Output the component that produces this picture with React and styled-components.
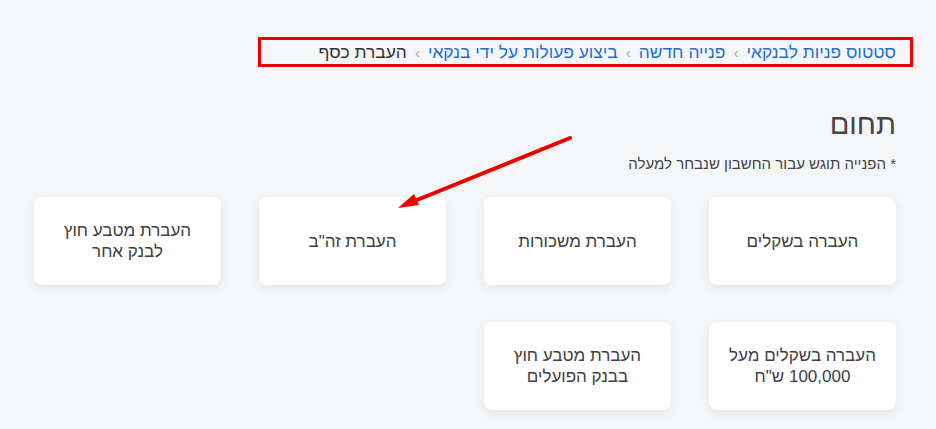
import React from "react";
import styled, { createGlobalStyle } from "styled-components";

const GlobalStyle = createGlobalStyle`
  html, body {
    margin: 0;
    padding: 0;
    background: #f5f6f8;
  }
  body {
    font-family: "Liberation Sans", "DejaVu Sans", Arial, sans-serif;
    color: #454545;
  }
`;

const Page = styled.div`
  position: relative;
  direction: rtl;
  width: 936px;
  height: 429px;
  box-sizing: border-box;
  padding: 40px 40px 0 40px;
  overflow: hidden;
`;

const Breadcrumbs = styled.nav`
  position: relative;
  display: flex;
  align-items: center;
  gap: 8px;
  height: 24px;
  font-size: 17.4px;

  .link {
    color: #1f6fd6;
    text-decoration: none;
  }
  .current {
    color: #333;
  }
  .sep {
    color: #a8a8a8;
    font-size: 15px;
  }
`;

const Highlight = styled.div`
  position: absolute;
  top: -3px;
  right: -17px;
  width: 655px;
  height: 30px;
  border: 3px solid #ee0000;
  box-sizing: border-box;
`;

const Title = styled.h1`
  margin: 42px 0 0;
  font-size: 29px;
  font-weight: normal;
  color: #444;
  line-height: 36px;
`;

const Note = styled.p`
  margin: 13px 0 0;
  font-size: 15px;
  line-height: 18px;
  color: #444;
`;

const Grid = styled.div`
  display: grid;
  grid-template-columns: repeat(4, 187px);
  column-gap: 38px;
  row-gap: 37px;
  margin-top: 24px;
`;

const Card = styled.div`
  height: 88px;
  background: #fff;
  border-radius: 8px;
  box-shadow: 0 3px 10px rgba(40, 50, 70, 0.09);
  display: flex;
  align-items: center;
  justify-content: center;
  text-align: center;
  font-size: 17px;
  line-height: 21px;
  color: #404040;
  padding: 0 12px;
`;

const Arrow = styled.svg`
  position: absolute;
  left: 0;
  top: 0;
  pointer-events: none;
`;

const crumbs = [
  "סטטוס פניות לבנקאי",
  "פנייה חדשה",
  "ביצוע פעולות על ידי בנקאי",
];

const cards = [
  "העברה בשקלים",
  "העברת משכורות",
  "העברת זה\"ב",
  ["העברת מטבע חוץ", "לבנק אחר"],
  ["העברה בשקלים מעל", "100,000 ש\"ח"],
  ["העברת מטבע חוץ", "בבנק הפועלים"],
];

export default function App() {
  return (
    <>
      <GlobalStyle />
      <Page>
        <Breadcrumbs>
          <Highlight />
          {crumbs.map((c) => (
            <React.Fragment key={c}>
              <a className="link" href="#">
                {c}
              </a>
              <span className="sep">›</span>
            </React.Fragment>
          ))}
          <span className="current">העברת כסף</span>
        </Breadcrumbs>
        <Title>תחום</Title>
        <Note>* הפנייה תוגש עבור החשבון שנבחר למעלה</Note>
        <Grid>
          {cards.map((c, i) => (
            <Card key={i}>
              {Array.isArray(c) ? (
                <span>
                  {c[0]}
                  <br />
                  <bdi>{c[1]}</bdi>
                </span>
              ) : (
                c
              )}
            </Card>
          ))}
        </Grid>
        <Arrow width="936" height="429" viewBox="0 0 936 429">
          <line
            x1="570"
            y1="138"
            x2="412"
            y2="202"
            stroke="#ee0000"
            strokeWidth="4"
            strokeLinecap="round"
          />
          <polygon points="398,208 414,194 419,205" fill="#ee0000" />
        </Arrow>
      </Page>
    </>
  );
}
